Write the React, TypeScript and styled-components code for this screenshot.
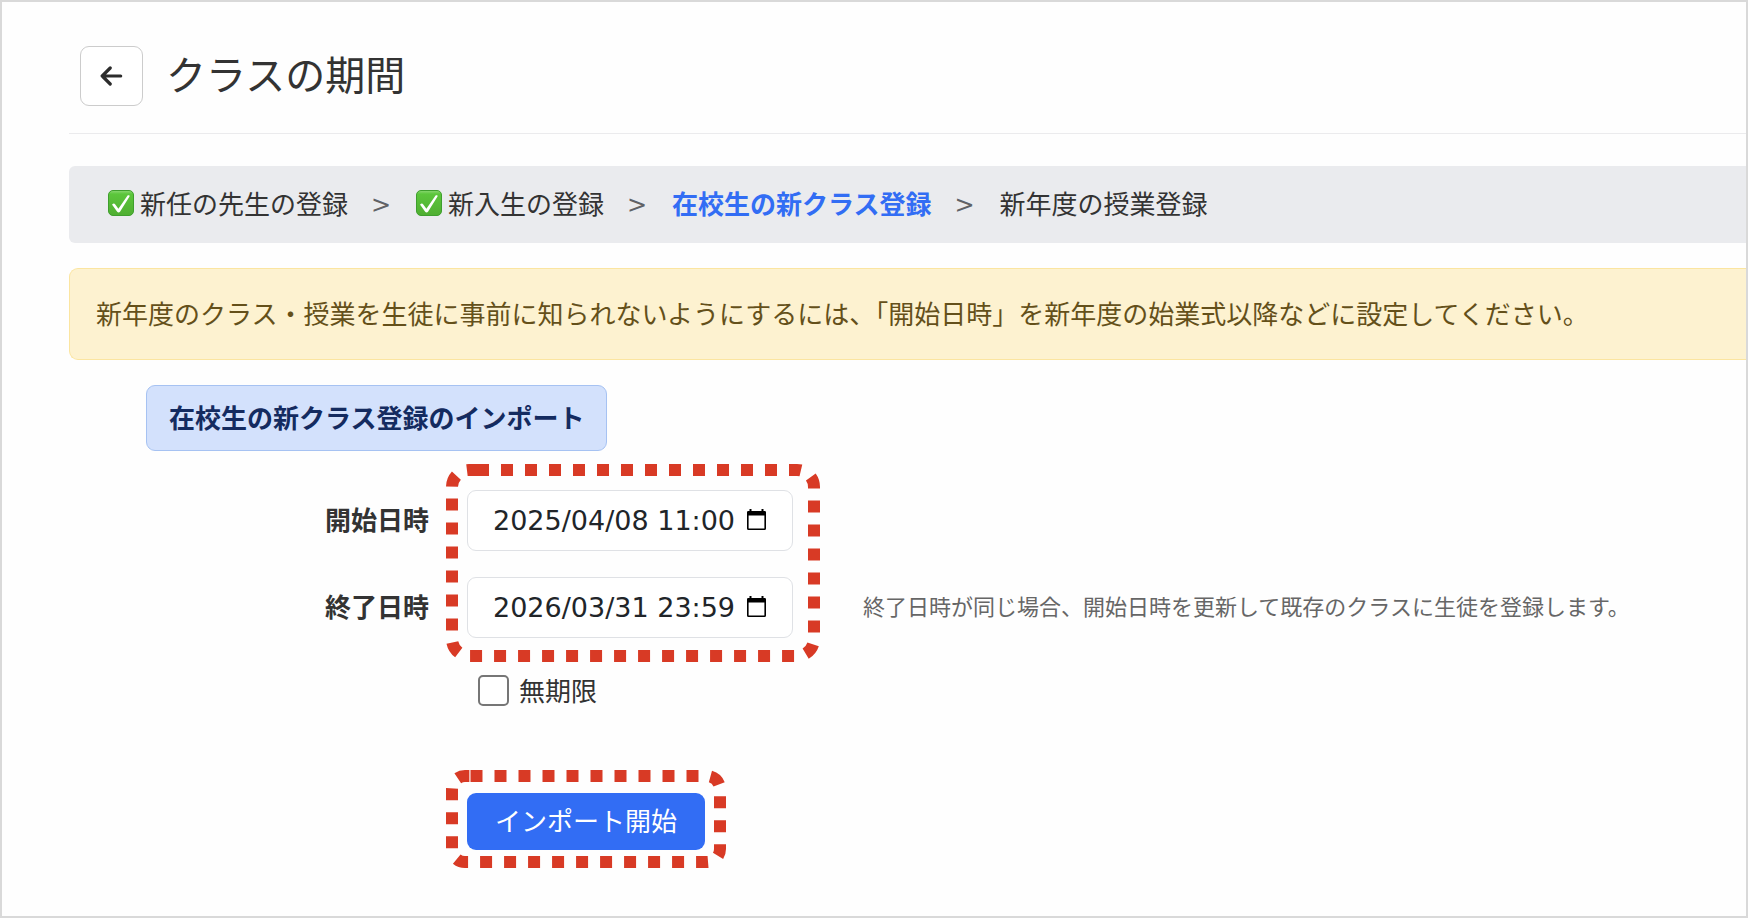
import React, { useState } from "react";
import styled, { createGlobalStyle } from "styled-components";

const GlobalStyle = createGlobalStyle`
  *, *::before, *::after { box-sizing: border-box; }
  body {
    margin: 0;
    background: #fefefe;
    color: #333;
    font-family: "Noto Sans CJK JP", sans-serif;
    font-size: 26px;
    line-height: 38px;
  }
`;

const Page = styled.main`
  min-height: 100vh;
  padding: 44px 0 44px 67px;
  border: 2px solid #d9d9d9;
`;

const Header = styled.header`
  display: flex;
  align-items: center;
  gap: 23px;
  padding: 0 0 27px 11px;
  border-bottom: 1px solid #ebebed;
`;

const BackButton = styled.button`
  display: flex;
  align-items: center;
  justify-content: center;
  width: 63px;
  height: 60px;
  padding: 0;
  border: 1px solid #ccc;
  border-radius: 9px;
  background: #fff;
  color: #2c2c2c;
`;

const Title = styled.h1`
  margin: 0;
  padding-bottom: 6px;
  font-size: 40px;
  font-weight: 400;
  line-height: 54px;
`;

const Steps = styled.ol`
  display: flex;
  align-items: center;
  margin: 32px 0 0;
  padding: 18px 39px 21px;
  border-radius: 6px 0 0 6px;
  background: #eaebee;
  list-style: none;
`;

const Step = styled.li<{ $current?: boolean }>`
  display: flex;
  align-items: center;
  gap: 6px;
  color: ${(p) => (p.$current ? "#326df4" : "#333")};
  font-weight: ${(p) => (p.$current ? 700 : 400)};
  white-space: nowrap;

  &:not(:last-child)::after {
    content: ">";
    width: 68px;
    margin-left: -6px;
    padding: 4px 2px 0 0;
    color: #606266;
    font-family: "DejaVu Sans", sans-serif;
    font-size: 24px;
    font-weight: 400;
    line-height: 34px;
    text-align: center;
  }
`;

const Notice = styled.p`
  margin: 25px 0 0;
  padding: 25px 26px 27px;
  border: 1px solid #fbe5a0;
  border-right: 0;
  border-radius: 9px 0 0 9px;
  background: #fdf2d0;
  color: #64501a;
`;

const Badge = styled.h2`
  width: fit-content;
  margin: 25px 0 0 77px;
  padding: 12px 22px 14px;
  border: 1px solid #a6c2f2;
  border-radius: 9px;
  background: #d3e1fc;
  color: #142b60;
  font-size: 26px;
  font-weight: 700;
`;

const Form = styled.form`
  display: grid;
  grid-template-columns: 360px 1fr;
  column-gap: 38px;
  margin-top: 39px;
`;

const Labels = styled.div`
  display: grid;
  grid-auto-rows: 61px;
  row-gap: 26px;
  align-items: center;
  align-content: start;
  justify-items: end;
`;

const Label = styled.label`
  padding-bottom: 3px;
  font-weight: 700;
`;

const Controls = styled.div`
  display: flex;
  flex-direction: column;
  align-items: flex-start;
`;

const PeriodRow = styled.div`
  display: flex;
  align-items: flex-end;
  gap: 70px;
`;

const Marked = styled.div`
  position: relative;
  display: grid;
  row-gap: 26px;
`;

const Marker = styled.svg<{ $top: number }>`
  position: absolute;
  top: ${(p) => p.$top}px;
  left: -21px;
  pointer-events: none;
`;

const DateField = styled.div`
  display: flex;
  align-items: center;
  width: 326px;
  height: 61px;
  padding: 0 26px 0 25px;
  border: 1px solid #dfe1e5;
  border-radius: 9px;
  background: #fff;
`;

const DateInput = styled.input`
  flex: 1;
  min-width: 0;
  padding: 0;
  border: 0;
  outline: 0;
  background: transparent;
  color: #212529;
  font-family: "DejaVu Sans", sans-serif;
  font-size: 27px;
`;

const PickerButton = styled.button`
  display: flex;
  padding: 0 0 2px;
  border: 0;
  background: transparent;
  color: #000;
`;

const Note = styled.p`
  margin: 0;
  padding-bottom: 4px;
  color: #666;
  font-size: 22px;
  line-height: 58px;
`;

const CheckRow = styled.label`
  display: flex;
  align-items: flex-end;
  gap: 10px;
  height: 38px;
  margin: 30px 0 0 11px;
`;

const Checkbox = styled.input`
  appearance: none;
  width: 31px;
  height: 31px;
  margin: 0;
  border: 2px solid #767676;
  border-radius: 5px;
  background: #fff;

  &:checked {
    background: #326df4;
    border-color: #326df4;
  }
`;

const CheckText = styled.span`
  line-height: 32px;
`;

const Submit = styled.div`
  margin-top: 87px;
`;

const SubmitButton = styled.button`
  height: 57px;
  padding: 0 28px 4px;
  border: 0;
  border-radius: 9px;
  background: #326df4;
  color: #fff;
  font-family: inherit;
  font-size: 26px;
`;

const ArrowIcon = () => (
  <svg width="24" height="24" viewBox="0 0 24 24" fill="none" stroke="currentColor" strokeWidth="3.200" strokeLinecap="round" strokeLinejoin="round" aria-hidden="true">
    <path d="M20.700 12H2.200M10.200 4L2.200 12l8 8" />
  </svg>
);

const DoneIcon = () => (
  <svg width="26" height="26" viewBox="0 0 26 26" role="img" aria-label="完了">
    <defs>
      <linearGradient id="done" x1="0" y1="0" x2="0" y2="1">
        <stop offset="0" stopColor="#8bd873" />
        <stop offset="0.14" stopColor="#5cc63c" />
        <stop offset="1" stopColor="#4fae31" />
      </linearGradient>
    </defs>
    <rect x="0.500" y="0.500" width="25" height="25" rx="4.500" fill="url(#done)" stroke="#3f9f2e" />
    <path d="M4.300 14.200c.9-.9 2.200-.9 2.800 0l3.300 4.600L19.400 5.700c.7-.9 2.800-.5 2.100.8L12 21.800c-.6 1-2.200 1-2.800 0l-4.700-6.600c-.3-.4-.5-.7-.2-1z" fill="#fff" />
  </svg>
);

const CalendarIcon = () => (
  <svg width="19" height="21" viewBox="0 0 19 21" aria-hidden="true">
    <path fill="currentColor" fillRule="evenodd" d="M2.500 0h2v2h10V0h2v2h1.200A1.300 1.300 0 0 1 19 3.300v16.200a1.500 1.500 0 0 1-1.500 1.500h-16A1.500 1.500 0 0 1 0 19.500V3.300A1.300 1.300 0 0 1 1.300 2h1.200zM1.600 6.600v12.800h15.800V6.600z" />
  </svg>
);

type HighlightProps = { width: number; height: number; radius: number; start: number; top: number };

/* Dotted frame drawn clockwise from a point on its top edge. */
const Highlight = ({ width, height, radius: r, start, top }: HighlightProps) => {
  const right = width - 6;
  const bottom = height - 6;
  const d = `M${start} 6H${right - r}A${r} ${r} 0 0 1 ${right} ${6 + r}V${bottom - r}A${r} ${r} 0 0 1 ${right - r} ${bottom}H${6 + r}A${r} ${r} 0 0 1 6 ${bottom - r}V${6 + r}A${r} ${r} 0 0 1 ${6 + r} 6H${start}`;
  return (
    <Marker $top={top} width={width} height={height} aria-hidden="true">
      <path d={d} fill="none" stroke="#d83a25" strokeWidth="12" strokeDasharray="12 12" />
    </Marker>
  );
};

const steps = [
  { name: "新任の先生の登録", done: true },
  { name: "新入生の登録", done: true },
  { name: "在校生の新クラス登録", current: true },
  { name: "新年度の授業登録" },
];

type PeriodInputProps = { id: string; name: string; initial: string };

const PeriodInput = ({ id, name, initial }: PeriodInputProps) => {
  const [value, setValue] = useState(initial);
  return (
    <DateField>
      <DateInput id={id} type="text" value={value} onChange={(e) => setValue(e.target.value)} />
      <PickerButton type="button" aria-label={`${name}を選択`}>
        <CalendarIcon />
      </PickerButton>
    </DateField>
  );
};

export default function App() {
  return (
    <>
      <GlobalStyle />
      <Page lang="ja">
        <Header>
          <BackButton type="button" aria-label="戻る">
            <ArrowIcon />
          </BackButton>
          <Title>クラスの期間</Title>
        </Header>
        <Steps>
          {steps.map((s) => (
            <Step key={s.name} $current={s.current} aria-current={s.current ? "step" : undefined}>
              {s.done && <DoneIcon />}
              {s.name}
            </Step>
          ))}
        </Steps>
        <Notice>
          新年度のクラス・授業を生徒に事前に知られないようにするには、「開始日時」を新年度の始業式以降などに設定してください。
        </Notice>
        <Badge>在校生の新クラス登録のインポート</Badge>
        <Form onSubmit={(e) => e.preventDefault()}>
          <Labels>
            <Label htmlFor="start">開始日時</Label>
            <Label htmlFor="end">終了日時</Label>
          </Labels>
          <Controls>
            <PeriodRow>
              <Marked>
                <PeriodInput id="start" name="開始日時" initial="2025/04/08 11:00" />
                <PeriodInput id="end" name="終了日時" initial="2026/03/31 23:59" />
                <Highlight width={374} height={198} radius={17} start={31} top={-26} />
              </Marked>
              <Note>終了日時が同じ場合、開始日時を更新して既存のクラスに生徒を登録します。</Note>
            </PeriodRow>
            <CheckRow>
              <Checkbox type="checkbox" />
              <CheckText>無期限</CheckText>
            </CheckRow>
            <Submit>
              <Marked>
                <SubmitButton type="submit">インポート開始</SubmitButton>
                <Highlight width={280} height={98} radius={13} start={24.5} top={-23} />
              </Marked>
            </Submit>
          </Controls>
        </Form>
      </Page>
    </>
  );
}
